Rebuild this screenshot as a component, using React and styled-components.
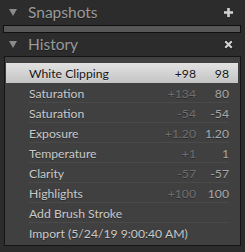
import React from "react";
import styled, { createGlobalStyle } from "styled-components";

const Global = createGlobalStyle`
  html, body { margin: 0; padding: 0; background: #2c2c2c; }
  body { font-family: Lato, "Open Sans", sans-serif; }
`;

const Page = styled.div`
  width: 245px;
  height: 252px;
  background: #2c2c2c;
  display: flex;
  flex-direction: column;
  overflow: hidden;
`;

const Header = styled.div`
  height: ${(p) => p.$h}px;
  display: flex;
  align-items: center;
  padding: 0 12px 0 9px;
  gap: 11px;
  box-sizing: border-box;
`;

const Title = styled.span`
  flex: 1;
  font-size: 15.5px;
  color: #9a9a9a;
  line-height: 1;
  padding-top: ${(p) => p.$pt || 0}px;
  text-shadow: 0 1px 0 rgba(0, 0, 0, 0.35);
`;

const Tri = styled.svg`
  width: 8px;
  height: 7px;
  flex: none;
`;

const SnapBar = styled.div`
  margin: 0 4px 0 3px;
  height: 8px;
  border: 1px solid #101010;
  background: #575757;
  box-sizing: border-box;
`;

const Panel = styled.div`
  margin: 0 4px 0 4px;
  border: 1px solid #141414;
  background: #404040;
  padding: 6px 2px 2px 1px;
  display: flex;
  flex-direction: column;
`;

const Row = styled.div`
  height: 20px;
  display: flex;
  align-items: center;
  position: relative;
  font-size: 12.2px;
  box-sizing: border-box;
  padding: 0 9px 0 23px;
  background: ${(p) =>
    p.$sel ? "linear-gradient(#e2e2e2, #c4c4c4)" : "transparent"};
  color: ${(p) => (p.$sel ? "#161616" : "#c9c9c9")};
  text-shadow: ${(p) =>
    p.$sel ? "0 1px 0 rgba(255,255,255,0.3)" : "0 1px 0 rgba(0,0,0,0.35)"};
  &::after {
    content: "";
    display: ${(p) => (p.$line ? "block" : "none")};
    position: absolute;
    left: 23px;
    right: 9px;
    bottom: 0;
    height: 1px;
    background: #4a4a4a;
  }
`;

const Name = styled.span`
  flex: 1;
  white-space: nowrap;
`;

const Num = styled.span`
  width: ${(p) => p.$w}px;
  text-align: right;
  color: ${(p) => (p.$sel ? "#161616" : p.$dim ? "#6f6f6f" : "#a8a8a8")};
`;

const Icon = styled.svg`
  width: 9px;
  height: 9px;
  flex: none;
`;

const rows = [
  ["White Clipping", "+98", "98"],
  ["Saturation", "+134", "80"],
  ["Saturation", "-54", "-54"],
  ["Exposure", "+1.20", "1.20"],
  ["Temperature", "+1", "1"],
  ["Clarity", "-57", "-57"],
  ["Highlights", "+100", "100"],
  ["Add Brush Stroke", "", ""],
  ["Import (5/24/19 9:00:40 AM)", "", ""],
];

function Triangle() {
  return (
    <Tri viewBox="0 0 8 7">
      <polygon points="0,0 8,0 4,7" fill="#8c8c8c" />
    </Tri>
  );
}

export default function App() {
  return (
    <Page>
      <Global />
      <Header $h={25}>
        <Triangle />
        <Title $pt={1}>Snapshots</Title>
        <Icon viewBox="0 0 9 9">
          <rect x="3.2" y="0" width="2.6" height="9" fill="#d0d0d0" />
          <rect x="0" y="3.2" width="9" height="2.6" fill="#d0d0d0" />
        </Icon>
      </Header>
      <SnapBar />
      <Header $h={23}>
        <Triangle />
        <Title>History</Title>
        <Icon viewBox="0 0 9 9">
          <path
            d="M1 1 L8 8 M8 1 L1 8"
            stroke="#1a1a1a"
            strokeWidth="3.6"
            strokeLinecap="square"
          />
          <path d="M1.2 1.2 L7.8 7.8 M7.8 1.2 L1.2 7.8" stroke="#d0d0d0" strokeWidth="2.2" />
        </Icon>
      </Header>
      <Panel>
        {rows.map(([n, a, b], i) => {
          const sel = i === 0;
          return (
            <Row key={i} $sel={sel} $line={!sel && i < rows.length - 1}>
              <Name>{n}</Name>
              <Num $w={50} $dim $sel={sel}>{a}</Num>
              <Num $w={33} $sel={sel}>{b}</Num>
            </Row>
          );
        })}
      </Panel>
    </Page>
  );
}
